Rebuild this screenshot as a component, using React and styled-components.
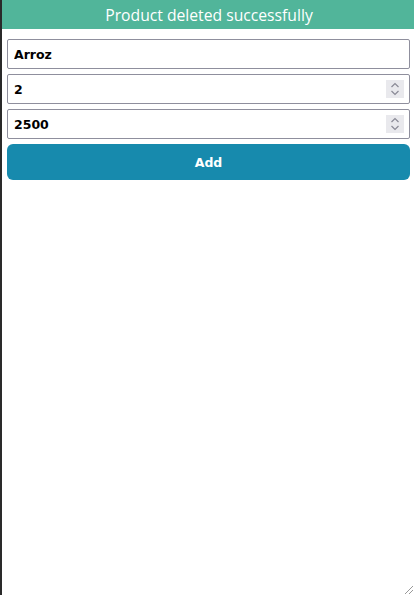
import React from "react";
import styled, { createGlobalStyle } from "styled-components";

const Global = createGlobalStyle`
  html, body { margin: 0; padding: 0; background: #fff; }
  body { width: 414px; height: 595px; overflow: hidden; }
  #root { height: 595px; }
`;

const Frame = styled.div`
  height: 595px;
  box-sizing: border-box;
  border-left: 2px solid #2a2a2a;
  display: flex;
  flex-direction: column;
  position: relative;
`;

const Banner = styled.div`
  height: 29px;
  background: #51b59a;
  color: #fff;
  font-family: "Open Sans", "DejaVu Sans", sans-serif;
  font-size: 15.7px;
  display: flex;
  align-items: center;
  justify-content: center;
  padding-left: 2px;
`;

const Form = styled.form`
  display: flex;
  flex-direction: column;
  gap: 5px;
  padding: 10px 4px 0 5px;
`;

const Field = styled.div`
  height: 30px;
  box-sizing: border-box;
  border: 1px solid #8f8f9d;
  border-radius: 2px;
  display: flex;
  align-items: center;
  padding: 0 5px 0 6px;
  background: #fff;
`;

const Input = styled.input`
  flex: 1;
  min-width: 0;
  border: none;
  outline: none;
  padding: 0;
  background: transparent;
  font-family: "DejaVu Sans", Verdana, sans-serif;
  font-weight: bold;
  font-size: 12.5px;
  color: #000;
`;

const Spinner = styled.span`
  width: 18px;
  height: 18px;
  background: #e9e9ed;
  display: flex;
  align-items: center;
  justify-content: center;
`;

const Button = styled.button`
  height: 36px;
  border: none;
  border-radius: 6px;
  background: #178aad;
  color: #fff;
  font-family: "DejaVu Sans", Verdana, sans-serif;
  font-weight: bold;
  font-size: 12.5px;
  cursor: pointer;
`;

const Grip = styled.svg`
  position: absolute;
  right: 0;
  bottom: 0;
`;

const SpinIcon = () => (
  <svg width="10" height="14" viewBox="0 0 10 14">
    <path d="M1.5 5 L5 1.5 L8.5 5" fill="none" stroke="#8a8a96" strokeWidth="1.2" />
    <path d="M1.5 9 L5 12.5 L8.5 9" fill="none" stroke="#8a8a96" strokeWidth="1.2" />
  </svg>
);

export default function App() {
  return (
    <>
      <Global />
      <Frame>
        <Banner>Product deleted successfully</Banner>
        <Form onSubmit={(e) => e.preventDefault()}>
          <Field>
            <Input type="text" defaultValue="Arroz" />
          </Field>
          <Field>
            <Input type="text" defaultValue="2" />
            <Spinner><SpinIcon /></Spinner>
          </Field>
          <Field>
            <Input type="text" defaultValue="2500" />
            <Spinner><SpinIcon /></Spinner>
          </Field>
          <Button type="submit">Add</Button>
        </Form>
        <Grip width="12" height="12" viewBox="0 0 12 12">
          <path d="M11 3 L3 11 M11 7 L7 11" stroke="#999" strokeWidth="1" />
        </Grip>
      </Frame>
    </>
  );
}
